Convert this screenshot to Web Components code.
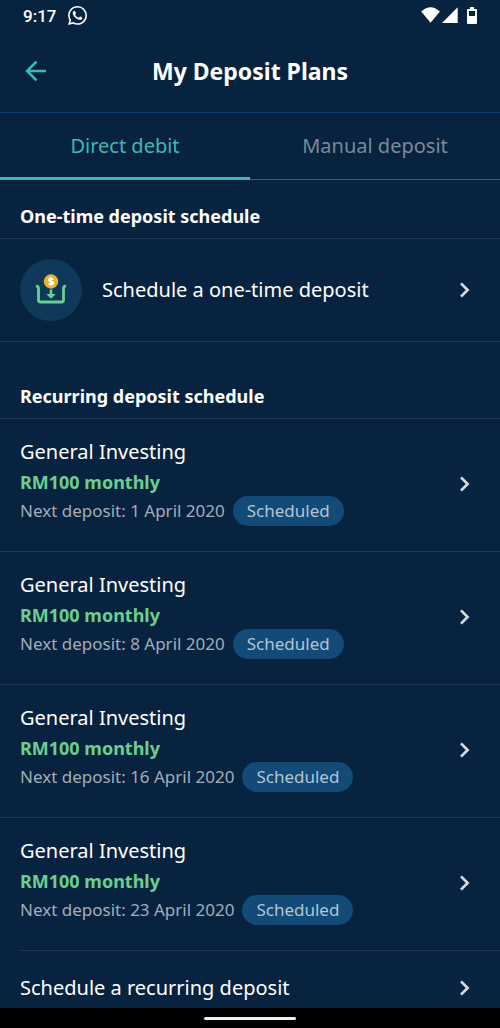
<!DOCTYPE html>
<html lang="en">
<head>
<meta charset="utf-8">
<meta name="viewport" content="width=device-width, initial-scale=1">
<title>My Deposit Plans</title>
<style>
  :root {
    --bg: #08233f;
    --line: #22395a;
    --teal: #3db8b4;
    --green: #6bcf92;
    --muted: #a3adb9;
  }
  body {
    margin: 0;
    background: var(--bg);
    color: #fff;
    font-family: "Noto Sans", sans-serif;
    font-size: 20px;
    line-height: 28px;
  }
</style>
</head>
<body>
<deposit-app>
  <status-bar slot="top" time="9:17"></status-bar>
  <app-header slot="top">My Deposit Plans</app-header>
  <tab-bar slot="top">
    <tab-item selected>Direct debit</tab-item>
    <tab-item>Manual deposit</tab-item>
  </tab-bar>

  <plan-section heading="One-time deposit schedule">
    <list-row class="tall"><deposit-icon slot="icon"></deposit-icon>Schedule a one-time deposit</list-row>
  </plan-section>
  <plan-section heading="Recurring deposit schedule">
    <plan-row name="General Investing" amount="RM100 monthly" date="1 April 2020" status="Scheduled"></plan-row>
    <plan-row name="General Investing" amount="RM100 monthly" date="8 April 2020" status="Scheduled"></plan-row>
    <plan-row name="General Investing" amount="RM100 monthly" date="16 April 2020" status="Scheduled"></plan-row>
    <plan-row name="General Investing" amount="RM100 monthly" date="23 April 2020" status="Scheduled" last></plan-row>
    <list-row>Schedule a recurring deposit</list-row>
  </plan-section>

  <nav-handle slot="bottom"></nav-handle>
</deposit-app>

<script>
  function define(name, html, setup) {
    const template = document.createElement('template');
    template.innerHTML = html;
    customElements.define(name, class extends HTMLElement {
      constructor() {
        super();
        this.attachShadow({ mode: 'open' }).append(template.content.cloneNode(true));
      }
      connectedCallback() {
        if (setup) setup(this, this.shadowRoot);
      }
    });
  }

  define('deposit-app', `
    <style>
      :host { display: flex; flex-direction: column; height: 100vh; }
      main { flex: 1; min-height: 0; overflow-y: auto; scrollbar-width: none; }
    </style>
    <slot name="top"></slot>
    <main><slot></slot></main>
    <slot name="bottom"></slot>`);

  define('status-bar', `
    <style>
      :host { display: flex; align-items: center; height: 31px; padding: 0 20px 0 23px; font: 500 17px/24px Roboto, sans-serif; }
      svg { display: block; }
      .chat { margin-left: 12px; }
      .right { display: flex; align-items: center; margin-left: auto; }
    </style>
    <span id="time"></span>
    <svg class="chat" width="19" height="19" viewBox="0 0 24 24" fill="#fff" role="img" aria-label="WhatsApp">
      <path d="M17.472 14.382c-.297-.149-1.758-.867-2.03-.967-.273-.099-.471-.148-.67.15-.197.297-.767.966-.94 1.164-.173.199-.347.223-.644.075-.297-.15-1.255-.463-2.39-1.475-.883-.788-1.48-1.761-1.653-2.059-.173-.297-.018-.458.13-.606.134-.133.298-.347.446-.52.149-.174.198-.298.298-.497.099-.198.05-.371-.025-.52-.075-.149-.669-1.612-.916-2.207-.242-.579-.487-.5-.669-.51-.173-.008-.371-.01-.57-.01-.198 0-.52.074-.792.372-.272.297-1.04 1.016-1.04 2.479 0 1.462 1.065 2.875 1.213 3.074.149.198 2.096 3.2 5.077 4.487.709.306 1.262.489 1.694.625.712.227 1.36.195 1.871.118.571-.085 1.758-.719 2.006-1.413.248-.694.248-1.289.173-1.413-.074-.124-.272-.198-.57-.347m-5.421 7.403h-.004a9.87 9.87 0 01-5.031-1.378l-.361-.214-3.741.982.998-3.648-.235-.374a9.86 9.86 0 01-1.51-5.26c.001-5.45 4.436-9.884 9.888-9.884 2.64 0 5.122 1.03 6.988 2.898a9.825 9.825 0 012.893 6.994c-.003 5.45-4.437 9.884-9.885 9.884m8.413-18.297A11.815 11.815 0 0012.05 0C5.495 0 .16 5.335.157 11.892c0 2.096.547 4.142 1.588 5.945L.057 24l6.305-1.654a11.882 11.882 0 005.683 1.448h.005c6.554 0 11.89-5.335 11.893-11.893a11.821 11.821 0 00-3.48-8.413z"/>
    </svg>
    <div class="right">
      <svg width="60" height="17" viewBox="0 0 60 17" fill="#fff" role="img" aria-label="Wi-Fi, signal and battery">
        <path d="M1.200 4.600Q10.500-4.200 19.900 4.600L10.600 15.800Z"/>
        <path d="M22 16L37.700.300V16Z"/>
        <path fill-rule="evenodd" d="M50 0h4v2h2q1 0 1 1V16q0 1-1 1h-8q-1 0-1-1V3q0-1 1-1h2ZM49 4v5h6V4Z"/>
      </svg>
    </div>`, (el, root) => {
      root.querySelector('#time').textContent = el.getAttribute('time');
    });

  define('app-header', `
    <style>
      :host { display: grid; grid-template-columns: 32px 1fr 32px; align-items: center; height: 79px; padding: 0 20px 2px; border-bottom: 1px solid #0c4068; }
      button { display: grid; place-items: center; width: 32px; height: 32px; padding: 0; border: 0; background: none; color: var(--teal); }
      h1 { margin: 0; font-size: 23px; line-height: 32px; font-weight: 700; text-align: center; }
    </style>
    <button type="button" aria-label="Back">
      <svg width="22" height="22" viewBox="0 0 22 22" fill="none" stroke="currentColor" stroke-width="2.600"><path d="M21 11H2.500M11.500 1.600L2.100 11l9.400 9.400"/></svg>
    </button>
    <h1><slot></slot></h1>`);

  define('tab-bar', `
    <style>
      :host { display: grid; grid-template-columns: 1fr 1fr; height: 67px; }
    </style>
    <slot></slot>`, el => el.setAttribute('role', 'tablist'));

  define('tab-item', `
    <style>
      :host { display: grid; }
      button { padding: 0; border: 0; border-bottom: 1px solid #4a5a70; background: none; color: #7b8a9b; font: inherit; }
      :host([selected]) button { padding-top: 2px; border-bottom: 3px solid var(--teal); color: var(--teal); }
    </style>
    <button type="button" role="tab"><slot></slot></button>`, (el, root) => {
      root.querySelector('button').setAttribute('aria-selected', el.hasAttribute('selected'));
    });

  define('plan-section', `
    <style>
      :host { display: block; }
      :host(:not(:first-of-type)) { padding-top: 18px; }
      h2 { margin: 0; padding: 22px 20px 8px; font-size: 18px; line-height: 28px; font-weight: 700; border-bottom: 1px solid var(--line); }
    </style>
    <h2></h2>
    <slot></slot>`, (el, root) => {
      root.querySelector('h2').textContent = el.getAttribute('heading');
    });

  define('chevron-icon', `
    <style>:host { display: block; flex: none; margin-left: auto; } svg { display: block; }</style>
    <svg width="12" height="16" viewBox="0 0 12 16" fill="none" stroke="#d6d9de" stroke-width="2.700" aria-hidden="true"><path d="M2 1.400L8.600 8 2 14.600"/></svg>`);

  define('deposit-icon', `
    <style>
      :host { display: grid; place-items: center; width: 62px; height: 62px; margin-right: 20px; border-radius: 50%; background: #0e395b; }
      svg { display: block; }
    </style>
    <svg width="32" height="32" viewBox="0 0 32 32" aria-hidden="true">
      <path d="M1 12.300Q3.500 11.800 3.500 14.500V26Q3.500 28 5.500 28H26.500Q28.500 28 28.500 26V14.500Q28.500 11.800 31 12.300" fill="none" stroke="#6bcf92" stroke-width="2.800"/>
      <path d="M14.700 15.500h2.600v4.500h3.500L16 24.700 11.200 20h3.500Z" fill="#6bcf92"/>
      <circle cx="16" cy="7.500" r="7.200" fill="#eeb02f"/>
      <path d="M18.300 5.700Q17.500 4.700 16 4.700 13.800 4.700 13.800 6.100 13.800 7.200 16 7.500 18.300 7.800 18.300 9 18.300 10.400 16 10.400 14.400 10.400 13.600 9.400M16 3v9" fill="none" stroke="#fff" stroke-width="1.700"/>
    </svg>`);

  define('list-row', `
    <style>
      :host { display: block; }
      button { display: flex; align-items: center; box-sizing: border-box; width: 100%; min-height: 74px; padding: 0 29px 0 20px; border: 0; background: none; color: inherit; font: inherit; text-align: left; }
      :host(.tall) button { min-height: 103px; border-bottom: 1px solid var(--line); }
    </style>
    <button type="button"><slot name="icon"></slot><span><slot></slot></span><chevron-icon></chevron-icon></button>`);

  define('plan-row', `
    <style>
      :host { display: block; }
      button { display: flex; align-items: center; width: 100%; padding: 19px 29px 21px 20px; border: 0; background: none; color: inherit; font: inherit; text-align: left; }
      hr { margin: 0; border: 0; border-top: 1px solid var(--line); }
      :host([last]) hr { margin-left: 20px; }
      span { display: block; }
      .text { padding-bottom: 4px; }
      .amount { padding-top: 2px; color: var(--green); font-size: 18px; font-weight: 700; }
      .next { display: flex; align-items: center; gap: 8px; color: var(--muted); font-size: 17px; line-height: 30px; }
      .pill { padding: 0 14px; border-radius: 15px; background: #124a78; color: #b4c4d3; }
    </style>
    <button type="button">
      <span class="text">
        <span class="name"></span>
        <span class="amount"></span>
        <span class="next"><span class="date"></span><span class="pill"></span></span>
      </span>
      <chevron-icon></chevron-icon>
    </button>
    <hr>`, (el, root) => {
      const put = (cls, text) => { root.querySelector(cls).textContent = text; };
      put('.name', el.getAttribute('name'));
      put('.amount', el.getAttribute('amount'));
      put('.date', 'Next deposit: ' + el.getAttribute('date'));
      put('.pill', el.getAttribute('status'));
    });

  define('nav-handle', `
    <style>
      :host { display: grid; place-items: center; height: 20px; padding-top: 1px; box-sizing: border-box; background: #000; }
      div { width: 92px; height: 3px; border-radius: 2px; background: #f2f2f2; }
    </style>
    <div></div>`);
</script>
</body>
</html>
